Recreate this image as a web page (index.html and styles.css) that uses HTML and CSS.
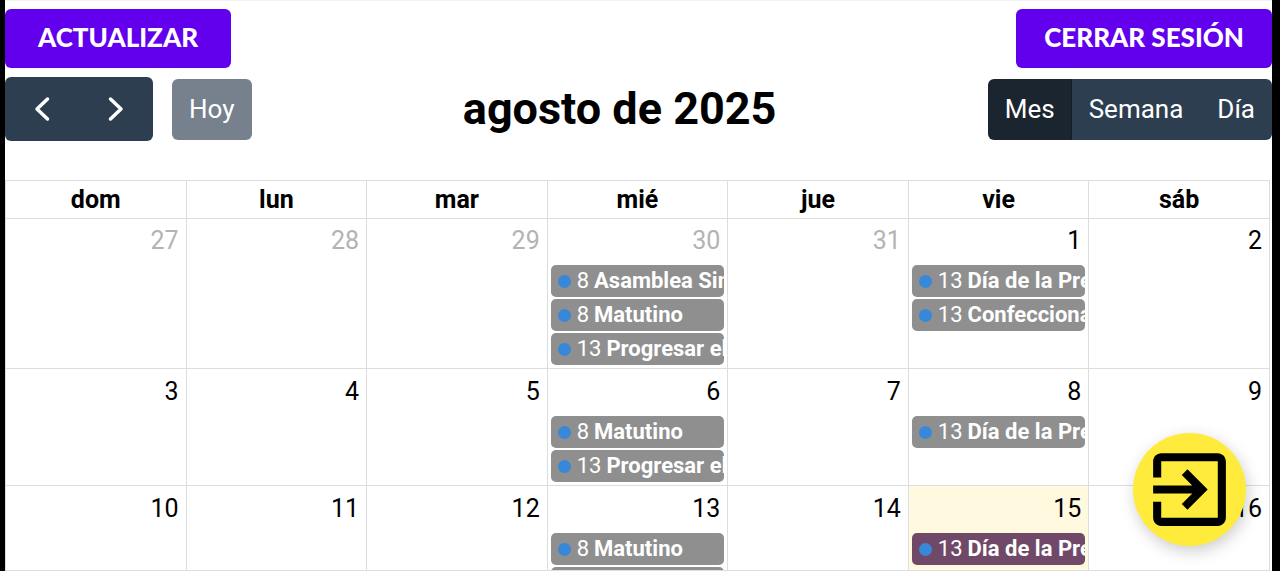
FILE: index.html
```html
<!DOCTYPE html>
<html lang="es">
<head>
<meta charset="utf-8">
<meta name="viewport" content="width=device-width, initial-scale=1">
<title>agosto de 2025</title>
<link rel="stylesheet" href="styles.css">
</head>
<body>
<div class="app">
  <header class="actions">
    <button class="action" type="button">ACTUALIZAR</button>
    <button class="action" type="button">CERRAR SESIÓN</button>
  </header>
  <div class="toolbar">
    <div class="toolbar-start">
      <div class="group nav">
        <button class="btn arrow" type="button" aria-label="Anterior"><svg viewBox="0 0 16 26"><path d="M13.500 3 3 13l10.500 10"/></svg></button>
        <button class="btn arrow" type="button" aria-label="Siguiente"><svg viewBox="0 0 16 26"><path d="M2.500 3 13 13 2.500 23"/></svg></button>
      </div>
      <button class="btn today-btn" type="button" disabled>Hoy</button>
    </div>
    <h1 class="title">agosto de 2025</h1>
    <div class="toolbar-end">
      <div class="group">
        <button class="btn active" type="button" aria-pressed="true">Mes</button>
        <button class="btn" type="button" aria-pressed="false">Semana</button>
        <button class="btn" type="button" aria-pressed="false">Día</button>
      </div>
    </div>
  </div>
  <main class="calendar">
    <table class="month">
      <thead>
        <tr><th scope="col">dom</th><th scope="col">lun</th><th scope="col">mar</th><th scope="col">mié</th><th scope="col">jue</th><th scope="col">vie</th><th scope="col">sáb</th></tr>
      </thead>
      <tbody>
        <tr>
          <td class="other"><a class="day" href="#">27</a></td>
          <td class="other"><a class="day" href="#">28</a></td>
          <td class="other"><a class="day" href="#">29</a></td>
          <td class="other"><a class="day" href="#">30</a>
            <div class="events">
              <a class="event" href="#"><span class="dot"></span><span class="time">8</span><b class="name">Asamblea Sin</b></a>
              <a class="event" href="#"><span class="dot"></span><span class="time">8</span><b class="name">Matutino</b></a>
              <a class="event" href="#"><span class="dot"></span><span class="time">13</span><b class="name">Progresar el</b></a>
            </div></td>
          <td class="other"><a class="day" href="#">31</a></td>
          <td><a class="day" href="#">1</a>
            <div class="events">
              <a class="event" href="#"><span class="dot"></span><span class="time">13</span><b class="name">Día de la Pre</b></a>
              <a class="event" href="#"><span class="dot"></span><span class="time">13</span><b class="name">Confecciona</b></a>
            </div></td>
          <td><a class="day" href="#">2</a></td>
        </tr>
        <tr>
          <td><a class="day" href="#">3</a></td>
          <td><a class="day" href="#">4</a></td>
          <td><a class="day" href="#">5</a></td>
          <td><a class="day" href="#">6</a>
            <div class="events">
              <a class="event" href="#"><span class="dot"></span><span class="time">8</span><b class="name">Matutino</b></a>
              <a class="event" href="#"><span class="dot"></span><span class="time">13</span><b class="name">Progresar el</b></a>
            </div></td>
          <td><a class="day" href="#">7</a></td>
          <td><a class="day" href="#">8</a>
            <div class="events">
              <a class="event" href="#"><span class="dot"></span><span class="time">13</span><b class="name">Día de la Pre</b></a>
            </div></td>
          <td><a class="day" href="#">9</a></td>
        </tr>
        <tr>
          <td><a class="day" href="#">10</a></td>
          <td><a class="day" href="#">11</a></td>
          <td><a class="day" href="#">12</a></td>
          <td><a class="day" href="#">13</a>
            <div class="events">
              <a class="event" href="#"><span class="dot"></span><span class="time">8</span><b class="name">Matutino</b></a>
              <a class="event" href="#" aria-label="Evento"></a>
            </div></td>
          <td><a class="day" href="#">14</a></td>
          <td class="today"><a class="day" href="#">15</a>
            <div class="events">
              <a class="event current" href="#"><span class="dot"></span><span class="time">13</span><b class="name">Día de la Pre</b></a>
            </div></td>
          <td><a class="day" href="#">16</a></td>
        </tr>
      </tbody>
    </table>
  </main>
  <button class="fab" type="button" aria-label="Entrar">
    <svg viewBox="0 0 24 24"><path d="M10.090 15.590 11.500 17l5-5-5-5-1.410 1.410L12.670 11H3v2h9.670zM19 3H5c-1.110 0-2 .9-2 2v4h2V5h14v14H5v-4H3v4c0 1.100.89 2 2 2h14c1.100 0 2-.9 2-2V5c0-1.100-.9-2-2-2z"/></svg>
  </button>
</div>
</body>
</html>
```
FILE: styles.css
```css
* { box-sizing: border-box; }
body {
  margin: 0;
  background: #fff;
  color: #000;
  font-family: Roboto, "Liberation Sans", sans-serif;
  font-size: 25px;
}
a { color: inherit; text-decoration: none; }
button { border: 0; font: inherit; cursor: pointer; }

.app {
  display: flex;
  flex-direction: column;
  height: 100vh;
  border: solid #000;
  border-width: 0 8px 0 5px;
}

.actions {
  display: flex;
  justify-content: space-between;
  padding-top: 8px;
  border-top: 1px solid #f3f3f3;
}
.action {
  height: 59px;
  padding: 0 28px 4px;
  border-radius: 6px;
  background: #6200ee;
  color: #fff;
  font-family: Lato, sans-serif;
  font-size: 26px;
  font-weight: 900;
}
.action:first-child { padding: 0 33px 4px; }

.toolbar {
  display: flex;
  align-items: center;
  justify-content: space-between;
  padding-top: 9px;
  margin-bottom: 39px;
}
.toolbar-start { display: flex; align-items: center; gap: 19px; }
.group { display: flex; border-radius: 6px; overflow: hidden; }
.btn {
  height: 61px;
  padding: 0 17px;
  background: #2c3e50;
  color: #fff;
  font-size: 26px;
  line-height: 36px;
}
.arrow {
  display: grid;
  place-items: center;
  width: 74px;
  height: 64px;
}
.arrow svg {
  width: 16px;
  height: 26px;
  fill: none;
  stroke: #fff;
  stroke-width: 3.500;
  stroke-linecap: round;
  stroke-linejoin: round;
}
.today-btn { border-radius: 6px; background: #76818d; }
.active { background: #1a252f; box-shadow: inset -1px 0 #151e27; }
.title { margin: 0; font-size: 45px; line-height: 52px; }

.calendar {
  flex: 1;
  min-height: 0;
  margin-right: 2px;
  overflow: auto;
  scrollbar-width: none;
  border: 1px solid #ddd;
  border-right: 0;
}
.month {
  width: 100%;
  table-layout: fixed;
  border-collapse: separate;
  border-spacing: 0;
}
th, td {
  padding: 0;
  border: solid #ddd;
  border-width: 0 1px 1px 0;
}
th { height: 38px; line-height: 36px; }
td { vertical-align: top; }
.day {
  display: block;
  padding: 5px 7px 5px;
  line-height: 34px;
  text-align: right;
}
tr + tr .day { padding-top: 6px; }
.other .day { color: #b3b3b3; }
.today { background: #fffadf; }
.events {
  display: flex;
  flex-direction: column;
  gap: 2px;
  padding: 2px 3px 3px;
}
.event {
  display: flex;
  align-items: center;
  height: 32px;
  padding-left: 7px;
  border-radius: 5px;
  overflow: hidden;
  background: #8f8f8f;
  color: #fff;
  font-size: 22px;
  line-height: 32px;
  white-space: nowrap;
}
.current { background: #704868; }
.dot {
  flex: none;
  width: 13px;
  height: 13px;
  margin-right: 6px;
  border-radius: 50%;
  background: #3788d8;
}
.time { margin-right: 5px; }

.fab {
  position: fixed;
  right: 34px;
  bottom: 25px;
  display: grid;
  place-items: center;
  width: 113px;
  height: 113px;
  padding: 0;
  border-radius: 50%;
  background: #ffeb3b;
  box-shadow: 2px 5px 16px rgba(0, 0, 0, .2);
}
.fab svg { width: 97px; height: 97px; }
```
